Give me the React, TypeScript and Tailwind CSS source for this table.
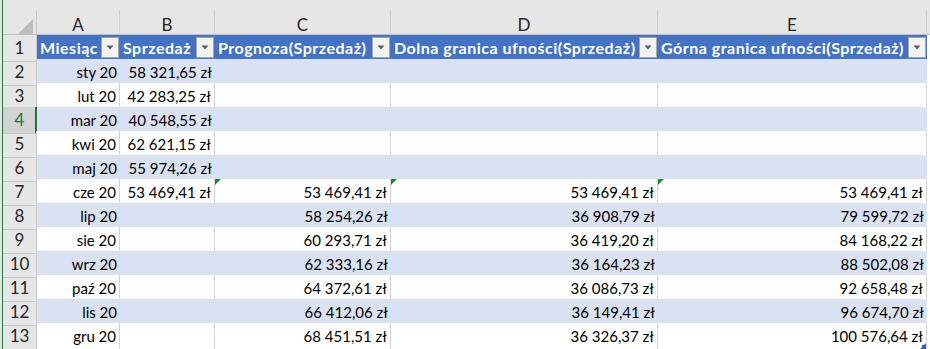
import React from 'react'

const FONT = { fontFamily: 'Lato, "Open Sans", "Noto Sans", sans-serif' }

const GRID = 'grid grid-cols-[34px_83px_95px_176px_267px_269px_1fr]'

const COL_LETTERS = ['A', 'B', 'C', 'D', 'E']

const HEADERS = [
  'Miesiąc',
  'Sprzedaż',
  'Prognoza(Sprzedaż)',
  'Dolna granica ufności(Sprzedaż)',
  'Górna granica ufności(Sprzedaż)',
]

type Row = [string, string, string, string, string]

const ROWS: Row[] = [
  ['sty 20', '58 321,65 zł', '', '', ''],
  ['lut 20', '42 283,25 zł', '', '', ''],
  ['mar 20', '40 548,55 zł', '', '', ''],
  ['kwi 20', '62 621,15 zł', '', '', ''],
  ['maj 20', '55 974,26 zł', '', '', ''],
  ['cze 20', '53 469,41 zł', '53 469,41 zł', '53 469,41 zł', '53 469,41 zł'],
  ['lip 20', '', '58 254,26 zł', '36 908,79 zł', '79 599,72 zł'],
  ['sie 20', '', '60 293,71 zł', '36 419,20 zł', '84 168,22 zł'],
  ['wrz 20', '', '62 333,16 zł', '36 164,23 zł', '88 502,08 zł'],
  ['paź 20', '', '64 372,61 zł', '36 086,73 zł', '92 658,48 zł'],
  ['lis 20', '', '66 412,06 zł', '36 149,41 zł', '96 674,70 zł'],
  ['gru 20', '', '68 451,51 zł', '36 326,37 zł', '100 576,64 zł'],
]

function FilterButton() {
  return (
    <div className="flex h-[21px] w-[18px] shrink-0 items-center justify-center border border-[#a6a6a6] bg-[#f3f3f3]">
      <svg width="8" height="5" viewBox="0 0 8 5">
        <polygon points="0.5,0.5 7.5,0.5 4,4.5" fill="#5f5f5f" />
      </svg>
    </div>
  )
}

function ErrorMark() {
  return (
    <svg className="absolute left-0 top-0" width="6" height="6" viewBox="0 0 6 6">
      <polygon points="0,0 6,0 0,6" fill="#1c8c2c" />
    </svg>
  )
}

export default function App() {
  return (
    <div className="flex h-[349px] w-[930px] overflow-hidden bg-[#e6e6e6] text-[15px]" style={FONT}>
      <div className="w-[2px] shrink-0" />
      <div className="w-[1px] shrink-0 bg-[#217346]" />

      <div className="flex flex-1 flex-col">
        <div className="h-[10px] shrink-0" />

        {/* column letters */}
        <div className={`${GRID} h-[25px] shrink-0 border-b border-[#bfbfbf] text-[17px] text-[#262626]`}>
          <div className="relative border-r border-[#c8c8c8]">
            <svg className="absolute right-[2px] bottom-[2px]" width="17" height="17" viewBox="0 0 17 17">
              <polygon points="16,0 16,16 0,16" fill="#bdbdbd" />
            </svg>
          </div>
          {COL_LETTERS.map((l) => (
            <div key={l} className="flex items-center justify-center border-r border-[#d0d0d0] pt-[2px]">
              {l}
            </div>
          ))}
          <div />
        </div>

        {/* table header row */}
        <div className={`${GRID} h-[24px] shrink-0`}>
          <div className="flex items-center justify-center border-r border-b border-[#c8c8c8] text-[17px] text-[#262626]">
            1
          </div>
          {HEADERS.map((h) => (
            <div
              key={h}
              className="flex items-center justify-between border-b border-[#4472c4] bg-[#4472c4] pl-[3px] pr-[1px] text-[16px] font-bold tracking-[0.5px] text-white"
            >
              <span className="whitespace-nowrap">{h}</span>
              <FilterButton />
            </div>
          ))}
          <div className="border-b border-[#d4d4d4] bg-white" />
        </div>

        {ROWS.map((row, i) => {
          const n = i + 2
          const banded = n % 2 === 0
          const selected = n === 4
          const last = n === 13
          return (
            <div key={n} className={`${GRID} h-[24px] shrink-0`}>
              <div
                className={
                  selected
                    ? 'flex items-center justify-center border-r-2 border-b border-r-[#217346] border-b-[#c8c8c8] bg-[#d2d2d2] pl-[1px] text-[17px] text-[#217346]'
                    : 'flex items-center justify-center border-r border-b border-[#c8c8c8] text-[17px] text-[#262626]'
                }
              >
                {n}
              </div>
              {row.map((v, c) => (
                <div
                  key={c}
                  className={
                    banded
                      ? 'relative flex items-center justify-end border-b border-[#8ea9db] bg-[#d9e1f2] pr-[3px] text-black'
                      : 'relative flex items-center justify-end border-r border-b border-r-[#d4d4d4] border-b-[#8ea9db] bg-white pr-[3px] text-black'
                  }
                >
                  {n === 7 && c >= 2 && <ErrorMark />}
                  <span className="whitespace-nowrap">{v}</span>
                  {last && c === 4 && (
                    <svg className="absolute right-0 bottom-0" width="6" height="6" viewBox="0 0 6 6">
                      <polygon points="6,0 6,6 0,6" fill="#3b5fb0" />
                      <rect x="2" y="2" width="4" height="4" fill="#3b5fb0" />
                    </svg>
                  )}
                </div>
              ))}
              <div className="border-b border-[#d4d4d4] bg-white" />
            </div>
          )
        })}

        {/* partial row 14 */}
        <div className={`${GRID} h-[24px] shrink-0`}>
          <div className="border-r border-[#c8c8c8]" />
          {COL_LETTERS.map((l) => (
            <div key={l} className="border-r border-[#d4d4d4] bg-white" />
          ))}
          <div className="bg-white" />
        </div>
      </div>
    </div>
  )
}
